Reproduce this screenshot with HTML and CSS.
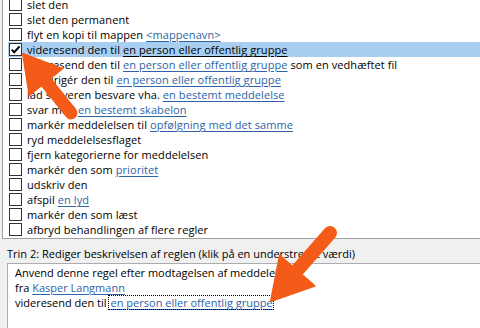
FILE: index.html
```html
<!DOCTYPE html>
<html lang="da">
<head>
<meta charset="utf-8">
<title>Regler</title>
<link rel="stylesheet" href="styles.css">
</head>
<body>
<div class="dialog">
  <div class="list">
    <div class="row"><span class="cb"></span><span class="t">slet den</span></div>
    <div class="row"><span class="cb"></span><span class="t">slet den permanent</span></div>
    <div class="row"><span class="cb"></span><span class="t">flyt en kopi til mappen <span class="lnk">&lt;mappenavn&gt;</span></span></div>
    <div class="row sel"><span class="cb"><svg class="chk" viewBox="0 0 11 11" width="11" height="11"><path d="M1.6 5.6 L4.2 8.2 L9.6 2.4" fill="none" stroke="#000" stroke-width="2"/></svg></span><span class="t">videresend den til <span class="lnk">en person eller offentlig gruppe</span></span></div>
    <div class="row"><span class="cb"></span><span class="t">videresend den til <span class="lnk">en person eller offentlig gruppe</span> som en vedhæftet fil</span></div>
    <div class="row"><span class="cb"></span><span class="t">omdirigér den til <span class="lnk">en person eller offentlig gruppe</span></span></div>
    <div class="row"><span class="cb"></span><span class="t">lad serveren besvare vha. <span class="lnk">en bestemt meddelelse</span></span></div>
    <div class="row"><span class="cb"></span><span class="t">svar med <span class="lnk">en bestemt skabelon</span></span></div>
    <div class="row"><span class="cb"></span><span class="t">markér meddelelsen til <span class="lnk">opfølgning med det samme</span></span></div>
    <div class="row"><span class="cb"></span><span class="t">ryd meddelelsesflaget</span></div>
    <div class="row"><span class="cb"></span><span class="t">fjern kategorierne for meddelelsen</span></div>
    <div class="row"><span class="cb"></span><span class="t">markér den som <span class="lnk">prioritet</span></span></div>
    <div class="row"><span class="cb"></span><span class="t">udskriv den</span></div>
    <div class="row"><span class="cb"></span><span class="t">afspil <span class="lnk">en lyd</span></span></div>
    <div class="row"><span class="cb"></span><span class="t">markér den som læst</span></div>
    <div class="row"><span class="cb"></span><span class="t">afbryd behandlingen af flere regler</span></div>
  </div>
  <div class="step">Trin 2: Rediger beskrivelsen af reglen (klik på en understreget værdi)</div>
  <div class="desc">
    <div class="line">Anvend denne regel efter modtagelsen af meddelelsen</div>
    <div class="line">fra <span class="lnk">Kasper Langmann</span></div>
    <div class="line">videresend den til<span class="focus"><span class="lnk">en person eller offentlig gruppe</span></span></div>
  </div>
  <svg class="arrows" viewBox="0 0 480 328" width="480" height="328">
    <g fill="#f45b18" stroke="#f45b18" stroke-linejoin="round">
      <line x1="42" y1="77" x2="71" y2="113" stroke-width="13" stroke-linecap="round"/>
      <polygon points="23,54 29.5,95 62,68.6" stroke-width="2"/>
      <line x1="294" y1="274" x2="330" y2="233" stroke-width="14" stroke-linecap="round"/>
      <polygon points="271,301 314.6,285.9 279.8,255.7" stroke-width="2"/>
    </g>
  </svg>
</div>
</body>
</html>
```
FILE: styles.css
```css
html, body {
  margin: 0;
  padding: 0;
}
body {
  background: #f0f0f0;
  font-family: "Open Sans", "Noto Sans", sans-serif;
  font-size: 11px;
  color: #000;
  overflow: hidden;
}
.dialog {
  position: relative;
  width: 480px;
  height: 328px;
  display: flex;
  flex-direction: column;
  overflow: hidden;
}
.list {
  margin: -3px -20px 0 2px;
  padding-bottom: 1px;
  background: #fff;
  border-left: 1px solid #a0a0a0;
  border-bottom: 1px solid #a0a0a0;
  flex: none;
}
.row {
  display: flex;
  align-items: center;
  height: 15px;
  margin-left: 5px;
  white-space: nowrap;
}
.row.sel {
  background: #a8cef0;
}
.cb {
  flex: none;
  width: 11px;
  height: 11px;
  border: 1px solid #333;
  background: #fff;
  margin-left: 1px;
  margin-right: 5px;
  display: flex;
}
.t {
  line-height: 15px;
  letter-spacing: 0.08px;
}
.lnk {
  color: #2e63a6;
  text-decoration: underline;
  text-underline-offset: 2px;
}
.sel .lnk {
  color: #000;
}
.step {
  flex: none;
  padding: 7px 0 2px 7px;
  line-height: 15px;
  white-space: nowrap;
}
.desc {
  flex: 1;
  margin: 0 -20px 0 7px;
  background: #fff;
  border-top: 1px solid #abadb3;
  border-left: 1px solid #abadb3;
  padding: 1px 0 0 7px;
}
.line {
  line-height: 15px;
  white-space: nowrap;
}
.focus {
  outline: 1px dotted #000;
  outline-offset: -1px;
  padding: 0 1px 0 3px;
  margin-left: 1px;
}
.arrows {
  position: absolute;
  left: 0;
  top: 0;
  pointer-events: none;
}
```
